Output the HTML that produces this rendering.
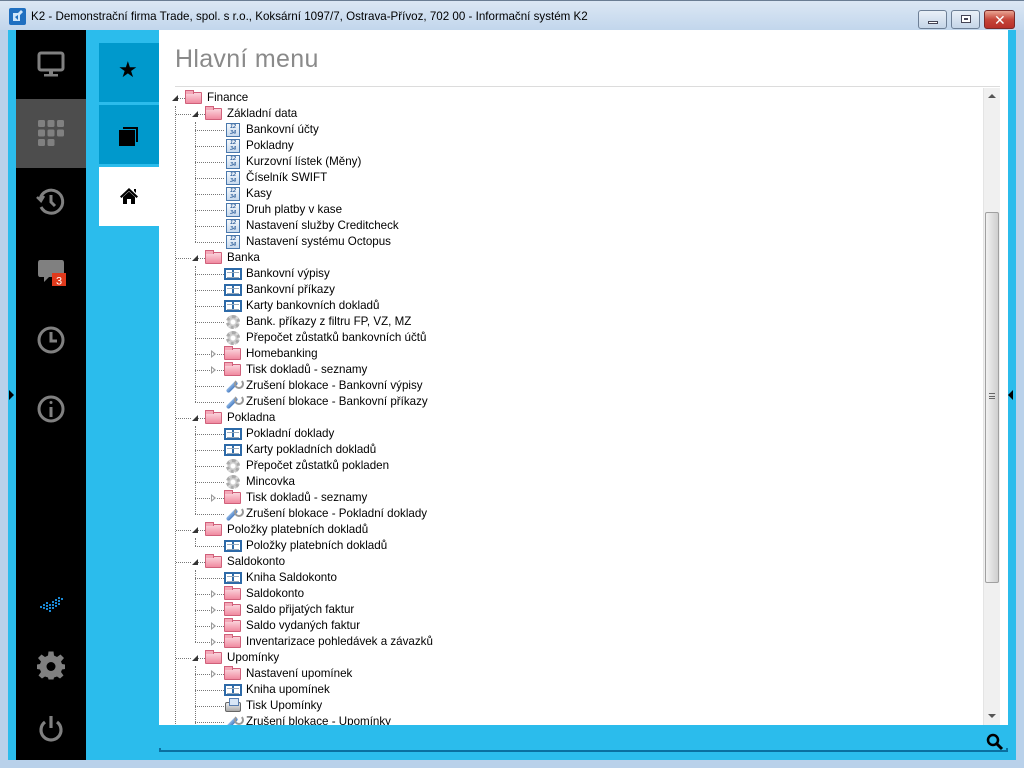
<!DOCTYPE html>
<html><head><meta charset="utf-8">
<style>
*{margin:0;padding:0;box-sizing:border-box}
body{width:1024px;height:768px;position:relative;overflow:hidden;background:#b9d1ea;font-family:"Liberation Sans","DejaVu Sans",sans-serif}
.abs{position:absolute}
#title{left:0;top:0;width:1024px;height:30px;background:linear-gradient(#dbe7f4,#c2d6ec);border-top:1px solid #6a7d93}
#title .t{left:31px;top:9px;font-size:11.6px;color:#000;white-space:nowrap}
.wb{top:9px;height:19px;border:1px solid #6d7f96;border-radius:3px;background:linear-gradient(#e9f0f8,#c5d5e8)}
#cyan{left:8px;top:30px;width:1008px;height:730px;background:#2bbcec}
#side{left:16px;top:30px;width:70px;height:730px;background:#000}
.tile{left:99px;width:60px;height:59px;background:#0099cc}
#panel{left:159px;top:30px;width:849px;height:695px;background:#fff}
#h1{left:175px;top:45px;font-size:25px;color:#8a8a8a;letter-spacing:0.3px}
#hr{left:175px;top:86px;width:825px;height:1px;background:#dcdcdc}
#sb{left:983px;top:88px;width:17px;height:637px;background:#f0f0f0;border-left:1px solid #e4e4e4}
#thumb{left:985px;top:212px;width:14px;height:371px;border:1px solid #a0a0a0;border-radius:2px;background:linear-gradient(90deg,#f2f2f2,#dcdcdc 60%,#cfcfcf)}
.r{position:absolute;height:16px;font-size:11.6px;line-height:16px;color:#000;white-space:nowrap}
.r .tx{position:absolute;left:32px;top:0}
.r .hl{position:absolute;left:-19px;width:29px;top:8px;border-top:1px dotted #777}
.r.l0 .hl{left:0;width:10px}
.r .ic{position:absolute;left:10px;top:1px;width:18px;height:14px}
.ex{position:absolute;left:-4px;top:4px;width:7px;height:7px;background:#fff}
.ex.o::before{content:"";position:absolute;left:1px;top:1px;width:0;height:0;border-right:6px solid #333;border-top:6px solid transparent}
.ex.c::before{content:"";position:absolute;left:1px;top:0;width:0;height:0;border-left:5px solid #999;border-top:4px solid transparent;border-bottom:4px solid transparent}
.ex.c::after{content:"";position:absolute;left:2px;top:2px;width:0;height:0;border-left:2px solid #fff;border-top:2px solid transparent;border-bottom:2px solid transparent}
.fo{background:linear-gradient(#fbd4dc,#f08aa0);border:1px solid #d0607a;border-radius:1px;top:2px!important;height:12px!important;width:17px!important}
.fo::before{content:"";position:absolute;left:-1px;top:-3px;width:7px;height:3px;background:#f4a8b8;border:1px solid #d0607a;border-bottom:none}
.nm{width:14px!important;left:12px!important;border:1px solid #4a78ac;background:linear-gradient(#f4f8fc,#c8daee);font-size:5.5px;line-height:6px;color:#3a68a0;text-align:center;font-weight:bold}
.bk{background:#fff;border:2px solid #2d6aa8;border-top-width:2px;top:2px!important;height:12px!important}
.bk::before{content:"";position:absolute;left:6px;top:0;width:2px;height:8px;background:#2d6aa8}
.bk::after{content:"";position:absolute;left:1px;top:2px;width:12px;height:4px;border-top:1px solid #9ab;border-bottom:1px solid #9ab}
.ge{left:12px!important;width:14px!important;height:14px!important;border-radius:50%;border:3px dotted #aaa;background:radial-gradient(circle,#fff 2px,#ccc 3px,#ccc 5px,transparent 5px)}
.wr::before{content:"";position:absolute;left:1px;top:6px;width:14px;height:4px;background:linear-gradient(#8fb8e8,#4a7cc0);transform:rotate(-45deg);border-radius:2px}
.wr::after{content:"";position:absolute;left:10px;top:0;width:6px;height:6px;border:2px solid #999;border-radius:50%;border-top-color:transparent}
.pr{left:11px!important;width:16px!important;height:10px!important;top:4px!important;background:linear-gradient(#eee,#aaa);border:1px solid #666;border-radius:2px}
.pr::before{content:"";position:absolute;left:3px;top:-5px;width:8px;height:6px;background:#d8e6f6;border:1px solid #5a7fb0}
.vg{position:absolute;width:0;border-left:1px dotted #777}
.si{position:absolute;left:20px;width:30px;height:30px}
</style></head><body>
<div id="title" class="abs">
 <svg class="abs" style="left:9px;top:7px" width="17" height="17"><rect x="0" y="0" width="17" height="17" rx="2" fill="#1f6fc0"/><path d="M4 13 L4 5 L9 5 L12 2 L14 4 L11 7 L11 13 Z" fill="#cfe6fa"/><path d="M6 9 L9 7 L9 12 Z" fill="#1f6fc0"/></svg>
 <div class="t abs">K2 - Demonstrační firma Trade, spol. s r.o., Koksární 1097/7, Ostrava-Přívoz, 702 00 - Informační systém K2</div>
 <div class="wb abs" style="left:918px;width:29px"><div class="abs" style="left:9px;top:10px;width:10px;height:3px;background:#fff;border:1px solid #445"></div></div>
 <div class="wb abs" style="left:951px;width:29px"><div class="abs" style="left:9px;top:4px;width:10px;height:8px;border:1px solid #445;background:#fff"><div class="abs" style="left:2px;top:2px;width:4px;height:2px;background:#445"></div></div></div>
 <div class="wb abs" style="left:984px;width:31px;background:linear-gradient(#e9a593,#c6463a 50%,#b8302a);border-color:#7a2a28"><div class="abs" style="left:9px;top:1px;color:#fff;font-size:14px;font-weight:bold;line-height:16px">✕</div></div>
</div>
<div id="cyan" class="abs"></div>
<div id="side" class="abs">
 <div class="abs" style="left:0;top:69px;width:70px;height:69px;background:#4d4d4d"></div>
 <svg class="si" style="top:19px" viewBox="0 0 30 30"><rect x="3" y="4" width="24" height="17" rx="2" fill="none" stroke="#808080" stroke-width="3"/><rect x="13" y="21" width="4" height="4" fill="#808080"/><rect x="8" y="25" width="14" height="2.5" fill="#808080"/></svg>
 <svg class="si" style="top:88px" viewBox="0 0 30 30" fill="#808080"><rect x="2" y="2" width="7" height="7" rx="1.5"/><rect x="11.5" y="2" width="7" height="7" rx="1.5"/><rect x="21" y="2" width="7" height="7" rx="1.5"/><rect x="2" y="11.5" width="7" height="7" rx="1.5"/><rect x="11.5" y="11.5" width="7" height="7" rx="1.5"/><rect x="21" y="11.5" width="7" height="7" rx="1.5"/><rect x="2" y="21" width="7" height="7" rx="1.5"/><rect x="11.5" y="21" width="7" height="7" rx="1.5"/></svg>
 <svg class="si" style="top:157px" viewBox="0 0 30 30" fill="none" stroke="#808080" stroke-width="3"><path d="M4 12 A11.5 11.5 0 1 1 5 20"/><path d="M15 8 V15 L19 19"/><path d="M1 10 L5 14 L8 9" stroke-width="2.5"/></svg>
 <svg class="si" style="top:226px" viewBox="0 0 30 30"><path d="M4 4 H26 Q28 4 28 7 V18 Q28 21 26 21 H13 L8 26 L8 21 H4 Q2 21 2 18 V7 Q2 4 4 4Z" fill="#808080"/><rect x="16" y="17" width="14" height="14" fill="#e03a1c"/><text x="23" y="28.5" font-size="11" fill="#fff" text-anchor="middle" font-family="Liberation Sans">3</text></svg>
 <svg class="si" style="top:295px" viewBox="0 0 30 30" fill="none" stroke="#808080" stroke-width="3"><circle cx="15" cy="15" r="12"/><path d="M15 7 V16 H21"/></svg>
 <svg class="si" style="top:364px" viewBox="0 0 30 30" fill="none" stroke="#808080" stroke-width="3"><circle cx="15" cy="15" r="12"/><path d="M15 13 V23"/><circle cx="15" cy="8.5" r="1.5" fill="#808080" stroke="none"/></svg>
 <svg class="si" style="top:562px" viewBox="0 0 30 30" fill="#1a8ad6"><g><rect x="4" y="14" width="2" height="2"/><rect x="7" y="12" width="2" height="2"/><rect x="7" y="15" width="2" height="2"/><rect x="10" y="10" width="2" height="2"/><rect x="10" y="13" width="2" height="2"/><rect x="10" y="16" width="2" height="2"/><rect x="13" y="12" width="2" height="2"/><rect x="13" y="15" width="2" height="2"/><rect x="13" y="18" width="2" height="2"/><rect x="16" y="9" width="2" height="2"/><rect x="16" y="12" width="2" height="2"/><rect x="16" y="15" width="2" height="2"/><rect x="19" y="7" width="2" height="2"/><rect x="19" y="10" width="2" height="2"/><rect x="19" y="13" width="2" height="2"/><rect x="22" y="5" width="2" height="2"/><rect x="22" y="8" width="2" height="2"/><rect x="22" y="11" width="2" height="2"/><rect x="25" y="6" width="2" height="2"/></g></svg>
 <svg class="si" style="top:621px" viewBox="0 0 30 30"><path fill="#808080" d="M12.5 2 H17.5 L18 6 L21 7.5 L24.5 5 L28 8.5 L25 12 L26 14.5 L29 15 V19.5 L26 20 L25 22.5 L27.5 26 L24 29 L21 27 L18 28 L17.5 30 H12.5 L12 28 L9 27 L6 29 L2.5 26 L5 22.5 L4 20 L1 19.5 V15 L4 14.5 L5 12 L2 8.5 L5.5 5 L9 7.5 L12 6 Z" transform="translate(0,-1.5)"/><circle cx="15" cy="15.5" r="4.5" fill="#000"/></svg>
 <svg class="si" style="top:683px" viewBox="0 0 30 30" fill="none" stroke="#808080" stroke-width="3.2"><path d="M9 9 A10 10 0 1 0 21 9"/><path d="M15 3 V15"/></svg>
</div>
<div class="abs" style="left:9px;top:390px;border-left:5px solid #000;border-top:5px solid transparent;border-bottom:5px solid transparent"></div>
<div class="abs" style="left:1008px;top:390px;border-right:5px solid #000;border-top:5px solid transparent;border-bottom:5px solid transparent"></div>
<div class="tile abs" style="top:43px"><div class="abs" style="left:19px;top:14px;font-size:22px;color:#000">★</div></div>
<div class="tile abs" style="top:105px"><div class="abs" style="left:24px;top:22px;width:15px;height:15px;border:2px solid #000;border-left:none;border-bottom:none"></div><div class="abs" style="left:20px;top:25px;width:16px;height:16px;background:#000"></div></div>
<div class="tile abs" style="top:167px;background:#fff"><svg class="abs" style="left:20px;top:20px" width="20" height="18" viewBox="0 0 20 18"><path d="M10 1 L19 9.5 L17.5 11 L10 4 L2.5 11 L1 9.5 Z M15 2 H17 V6 L15 4Z" fill="#000"/><path d="M4 10 L10 4.5 L16 10 V17 H12 V12 H8 V17 H4Z" fill="#000"/></svg></div>
<div id="panel" class="abs"></div>
<div id="h1" class="abs">Hlavní menu</div>
<div id="hr" class="abs"></div>
<div id="sb" class="abs"><div class="abs" style="left:4px;top:6px;border-bottom:4px solid #555;border-left:4px solid transparent;border-right:4px solid transparent"></div><div class="abs" style="left:4px;top:626px;border-top:4px solid #555;border-left:4px solid transparent;border-right:4px solid transparent"></div></div>
<div id="thumb" class="abs"><div class="abs" style="left:3px;top:180px;width:6px;height:6px;border-top:1px solid #666;border-bottom:1px solid #666"><div style="margin-top:2px;border-top:1px solid #666"></div></div></div>
<div class="abs" style="left:159px;top:748px;width:849px;height:4px;border-left:2px solid #0a6fa0;border-bottom:2px solid #0a6fa0;border-right:2px solid #0a6fa0"></div>
<svg class="abs" style="left:986px;top:733px" width="18" height="18" viewBox="0 0 18 18"><circle cx="7" cy="7" r="5" fill="none" stroke="#000" stroke-width="2.5"/><path d="M10.5 10.5 L16 16" stroke="#000" stroke-width="3"/></svg>

<div style="position:absolute;left:0;top:0;width:1024px;height:725px;overflow:hidden">
<div class="vg" style="left:175px;top:106px;height:630px"></div>
<div class="vg" style="left:195px;top:122px;height:120px"></div>
<div class="vg" style="left:195px;top:266px;height:136px"></div>
<div class="vg" style="left:195px;top:426px;height:88px"></div>
<div class="vg" style="left:195px;top:538px;height:8px"></div>
<div class="vg" style="left:195px;top:570px;height:72px"></div>
<div class="vg" style="left:195px;top:666px;height:70px"></div>

<div class="r l0" style="left:175px;top:90px"><i class="hl"></i><i class="ex o"></i><i class="ic fo"></i><span class="tx">Finance</span></div>
<div class="r l1" style="left:195px;top:106px"><i class="hl"></i><i class="ex o"></i><i class="ic fo"></i><span class="tx">Základní data</span></div>
<div class="r" style="left:214px;top:122px"><i class="hl"></i><i class="ic nm">12<br>34</i><span class="tx">Bankovní účty</span></div>
<div class="r" style="left:214px;top:138px"><i class="hl"></i><i class="ic nm">12<br>34</i><span class="tx">Pokladny</span></div>
<div class="r" style="left:214px;top:154px"><i class="hl"></i><i class="ic nm">12<br>34</i><span class="tx">Kurzovní lístek (Měny)</span></div>
<div class="r" style="left:214px;top:170px"><i class="hl"></i><i class="ic nm">12<br>34</i><span class="tx">Číselník SWIFT</span></div>
<div class="r" style="left:214px;top:186px"><i class="hl"></i><i class="ic nm">12<br>34</i><span class="tx">Kasy</span></div>
<div class="r" style="left:214px;top:202px"><i class="hl"></i><i class="ic nm">12<br>34</i><span class="tx">Druh platby v kase</span></div>
<div class="r" style="left:214px;top:218px"><i class="hl"></i><i class="ic nm">12<br>34</i><span class="tx">Nastavení služby Creditcheck</span></div>
<div class="r" style="left:214px;top:234px"><i class="hl"></i><i class="ic nm">12<br>34</i><span class="tx">Nastavení systému Octopus</span></div>
<div class="r l1" style="left:195px;top:250px"><i class="hl"></i><i class="ex o"></i><i class="ic fo"></i><span class="tx">Banka</span></div>
<div class="r" style="left:214px;top:266px"><i class="hl"></i><i class="ic bk"></i><span class="tx">Bankovní výpisy</span></div>
<div class="r" style="left:214px;top:282px"><i class="hl"></i><i class="ic bk"></i><span class="tx">Bankovní příkazy</span></div>
<div class="r" style="left:214px;top:298px"><i class="hl"></i><i class="ic bk"></i><span class="tx">Karty bankovních dokladů</span></div>
<div class="r" style="left:214px;top:314px"><i class="hl"></i><i class="ic ge"></i><span class="tx">Bank. příkazy z filtru FP, VZ, MZ</span></div>
<div class="r" style="left:214px;top:330px"><i class="hl"></i><i class="ic ge"></i><span class="tx">Přepočet zůstatků bankovních účtů</span></div>
<div class="r" style="left:214px;top:346px"><i class="hl"></i><i class="ex c"></i><i class="ic fo"></i><span class="tx">Homebanking</span></div>
<div class="r" style="left:214px;top:362px"><i class="hl"></i><i class="ex c"></i><i class="ic fo"></i><span class="tx">Tisk dokladů - seznamy</span></div>
<div class="r" style="left:214px;top:378px"><i class="hl"></i><i class="ic wr"></i><span class="tx">Zrušení blokace - Bankovní výpisy</span></div>
<div class="r" style="left:214px;top:394px"><i class="hl"></i><i class="ic wr"></i><span class="tx">Zrušení blokace - Bankovní příkazy</span></div>
<div class="r l1" style="left:195px;top:410px"><i class="hl"></i><i class="ex o"></i><i class="ic fo"></i><span class="tx">Pokladna</span></div>
<div class="r" style="left:214px;top:426px"><i class="hl"></i><i class="ic bk"></i><span class="tx">Pokladní doklady</span></div>
<div class="r" style="left:214px;top:442px"><i class="hl"></i><i class="ic bk"></i><span class="tx">Karty pokladních dokladů</span></div>
<div class="r" style="left:214px;top:458px"><i class="hl"></i><i class="ic ge"></i><span class="tx">Přepočet zůstatků pokladen</span></div>
<div class="r" style="left:214px;top:474px"><i class="hl"></i><i class="ic ge"></i><span class="tx">Mincovka</span></div>
<div class="r" style="left:214px;top:490px"><i class="hl"></i><i class="ex c"></i><i class="ic fo"></i><span class="tx">Tisk dokladů - seznamy</span></div>
<div class="r" style="left:214px;top:506px"><i class="hl"></i><i class="ic wr"></i><span class="tx">Zrušení blokace - Pokladní doklady</span></div>
<div class="r l1" style="left:195px;top:522px"><i class="hl"></i><i class="ex o"></i><i class="ic fo"></i><span class="tx">Položky platebních dokladů</span></div>
<div class="r" style="left:214px;top:538px"><i class="hl"></i><i class="ic bk"></i><span class="tx">Položky platebních dokladů</span></div>
<div class="r l1" style="left:195px;top:554px"><i class="hl"></i><i class="ex o"></i><i class="ic fo"></i><span class="tx">Saldokonto</span></div>
<div class="r" style="left:214px;top:570px"><i class="hl"></i><i class="ic bk"></i><span class="tx">Kniha Saldokonto</span></div>
<div class="r" style="left:214px;top:586px"><i class="hl"></i><i class="ex c"></i><i class="ic fo"></i><span class="tx">Saldokonto</span></div>
<div class="r" style="left:214px;top:602px"><i class="hl"></i><i class="ex c"></i><i class="ic fo"></i><span class="tx">Saldo přijatých faktur</span></div>
<div class="r" style="left:214px;top:618px"><i class="hl"></i><i class="ex c"></i><i class="ic fo"></i><span class="tx">Saldo vydaných faktur</span></div>
<div class="r" style="left:214px;top:634px"><i class="hl"></i><i class="ex c"></i><i class="ic fo"></i><span class="tx">Inventarizace pohledávek a závazků</span></div>
<div class="r l1" style="left:195px;top:650px"><i class="hl"></i><i class="ex o"></i><i class="ic fo"></i><span class="tx">Upomínky</span></div>
<div class="r" style="left:214px;top:666px"><i class="hl"></i><i class="ex c"></i><i class="ic fo"></i><span class="tx">Nastavení upomínek</span></div>
<div class="r" style="left:214px;top:682px"><i class="hl"></i><i class="ic bk"></i><span class="tx">Kniha upomínek</span></div>
<div class="r" style="left:214px;top:698px"><i class="hl"></i><i class="ic pr"></i><span class="tx">Tisk Upomínky</span></div>
<div class="r" style="left:214px;top:714px"><i class="hl"></i><i class="ic wr"></i><span class="tx">Zrušení blokace - Upomínky</span></div>
</div>
</body></html>
